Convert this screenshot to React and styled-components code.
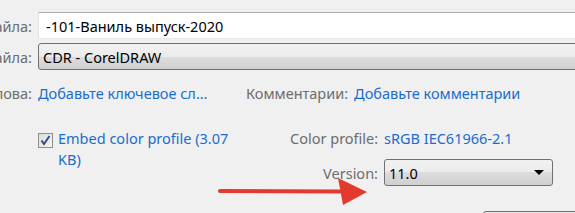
import React from 'react';
import styled, { createGlobalStyle } from 'styled-components';

const GlobalStyle = createGlobalStyle`
    html, body {
        margin: 0;
        padding: 0;
        background: #f0f0f0;
        overflow: hidden;
    }
    body {
        font-family: "Noto Sans", "Open Sans", sans-serif;
        font-size: 14.5px;
        color: #000;
    }
`;

const Page = styled.div`
    position: relative;
    width: 575px;
    height: 213px;
    overflow: hidden;
`;

const Shifted = styled.div`
    margin-left: -118px;
    padding-top: 12px;
`;

const FieldGrid = styled.div`
    display: grid;
    grid-template-columns: 150px 1fr;
    column-gap: 6px;
    row-gap: 4px;
    align-items: center;
`;

const Label = styled.span`
    flex: none;
    width: ${p => (p.$w ? `${p.$w}px` : 'auto')};
    color: #6d6d6d;
    text-align: right;
    white-space: nowrap;
`;

const TextBox = styled.div`
    height: 25px;
    margin-right: -20px;
    background: #fff;
    border: 1px solid #e2e3ea;
    border-top-color: #abadb3;
    border-bottom-color: #e3e9ef;
    display: flex;
    align-items: center;
    padding-left: 7px;
`;

const ComboBox = styled.div`
    height: ${p => p.$h || 25}px;
    width: ${p => (p.$w ? `${p.$w}px` : 'auto')};
    margin-right: ${p => (p.$w ? 0 : -20)}px;
    box-sizing: ${p => (p.$w ? 'border-box' : 'content-box')};
    border: 1px solid #707070;
    border-radius: 3px;
    background: linear-gradient(#f2f2f2 0%, #ebebeb 50%, #dddddd 50%, #cfcfcf 100%);
    display: flex;
    align-items: center;
    justify-content: space-between;
    padding: 0 8px 0 4px;
`;

const Caret = styled.span`
    width: 0;
    height: 0;
    border-left: 5px solid transparent;
    border-right: 5px solid transparent;
    border-top: 5px solid #000;
`;

const MetaRow = styled.div`
    display: flex;
    align-items: center;
    gap: 6px;
    margin-top: 13px;
    height: 20px;
`;

const Link = styled.span`
    flex: none;
    width: ${p => (p.$w ? `${p.$w}px` : 'auto')};
    color: #1a6dcd;
    white-space: nowrap;
    overflow: hidden;
    text-overflow: ellipsis;
`;

const MetaLabel = styled(Label)`
    margin-left: 32px;
`;

const OptionsRow = styled.div`
    display: flex;
    margin-top: 28px;
    padding-left: 156px;
`;

const CheckOption = styled.label`
    display: flex;
    align-items: flex-start;
    gap: 5px;
    width: 252px;
`;

const CheckBox = styled.span`
    flex: none;
    width: 13px;
    height: 13px;
    margin-top: 2px;
    border: 1px solid #8e8f8f;
    background: linear-gradient(135deg, #dcdcdc, #f6f6f6);
    display: flex;
    align-items: center;
    justify-content: center;
`;

const CheckText = styled.span`
    color: #1a6dcd;
    line-height: 21px;
    width: 175px;
    margin-top: -3px;
`;

const ProfileGrid = styled.div`
    display: grid;
    grid-template-columns: 88px auto;
    column-gap: 6px;
    row-gap: 11px;
    align-items: center;
    margin-top: -3px;
`;

const Footer = styled.div`
    display: flex;
    justify-content: flex-end;
    margin-top: 25px;
`;

const Button = styled.div`
    width: 100px;
    height: 20px;
    margin-right: -10px;
    border: 1px solid #707070;
    border-radius: 3px;
    background: #e8e8e8;
`;

const Arrow = styled.svg`
    position: absolute;
    left: 216px;
    top: 174px;
`;

export default function App() {
    return (
        <Page>
            <GlobalStyle />
            <Shifted>
                <FieldGrid>
                    <Label>Имя файла:</Label>
                    <TextBox>-101-Ваниль выпуск-2020</TextBox>
                    <Label>Тип файла:</Label>
                    <ComboBox>CDR - CorelDRAW</ComboBox>
                </FieldGrid>
                <MetaRow>
                    <Label $w={150}>Ключевые слова:</Label>
                    <Link $w={170}>Добавьте ключевое слово</Link>
                    <MetaLabel>Комментарии:</MetaLabel>
                    <Link>Добавьте комментарии</Link>
                </MetaRow>
                <OptionsRow>
                    <CheckOption>
                        <CheckBox>
                            <svg width="11" height="11" viewBox="0 0 11 11">
                                <path d="M1.5 5.5 L4 9 L9.5 1" fill="none" stroke="#3c4a8c" strokeWidth="2" />
                            </svg>
                        </CheckBox>
                        <CheckText>Embed color profile (3.07 KB)</CheckText>
                    </CheckOption>
                    <ProfileGrid>
                        <Label>Color profile:</Label>
                        <Link>sRGB IEC61966-2.1</Link>
                        <Label>Version:</Label>
                        <ComboBox $w={169} $h={27}>
                            11.0
                            <Caret />
                        </ComboBox>
                    </ProfileGrid>
                </OptionsRow>
                <Footer>
                    <Button />
                </Footer>
            </Shifted>
            <Arrow width="156" height="34" viewBox="0 0 156 34">
                <line x1="4" y1="17" x2="126" y2="17.5" stroke="#e23b2e" strokeWidth="4" strokeLinecap="round" />
                <polygon points="122,4 151,18 127,31" fill="#e23b2e" />
            </Arrow>
        </Page>
    );
}
